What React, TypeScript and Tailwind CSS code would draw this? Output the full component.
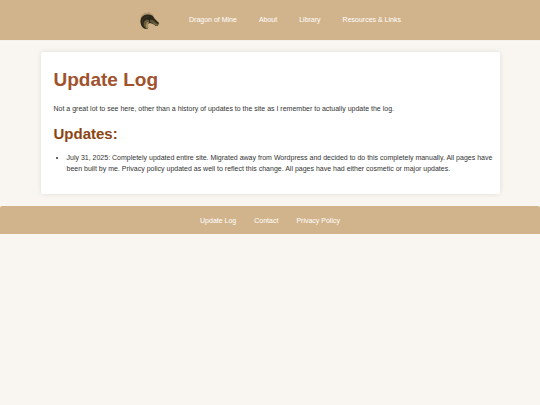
const navLinks = ["Dragon of Mine", "About", "Library", "Resources & Links"];
const footerLinks = ["Update Log", "Contact", "Privacy Policy"];

function DragonLogo() {
    return (
        <svg viewBox="0 0 40 34" className="h-[17px] w-5" role="img" aria-label="Dragon of Mine">
            <path d="M3 11l2-5 4-2 3-3 4 1 4-2 3 3 4 1 3 5-5 2-12 2-8 5z" fill="#8f7a59" opacity=".5" />
            <path
                d="M3 21C2 12 8 6 16 5c7-1 12 2 15 8l5 5 4 4-2 5-4 1-6-4-6-2-4 2-1 5 1 4-5 1C8 33 4 28 3 21z"
                fill="#2a2619"
            />
            <path d="M12 31c-5-6-3-13 3-16l6 2-3 4-1 6 1 6-3 0z" fill="#6b5e39" />
            <path d="M15 33c-3-6-1-11 3-14l2 1-2 6 1 6z" fill="#a08d5e" />
            <path d="M22 15l6 1 6 5 4 3-1 3-4 0-5-4-6-3z" fill="#5d5233" />
            <path d="M28 22l5 3 4 1" fill="none" stroke="#b39c6b" strokeWidth="1" />
            <path d="M7 22C6 14 11 10 19 9" fill="none" stroke="#3f3825" strokeWidth="2" />
        </svg>
    );
}

export default function App() {
    return (
        <div className="min-h-screen bg-[#f9f5f0] font-['Liberation_Sans',Arial,sans-serif] text-[7px] leading-[11px] text-[#333333]">
            <header className="bg-[#d2b48c] py-3 shadow-[0_0_1px_rgba(0,0,0,0.1)]">
                <nav className="flex h-4 items-center justify-center gap-[22px] text-white">
                    <a href="#home" className="mr-2">
                        <DragonLogo />
                    </a>
                    {navLinks.map(link => <a key={link} href="#" className="pb-0.5">{link}</a>)}
                </nav>
            </header>

            <main className="mx-auto my-3 w-[85%] rounded-xs bg-white pt-[13px] pr-1 pb-5 pl-[13px] shadow-[0_0_5px_rgba(0,0,0,0.1)]">
                <h1 className="text-[19px] leading-[30px] font-bold text-[#a0522d]">Update Log</h1>
                <p className="mt-2">
                    Not a great lot to see here, other than a history of updates to the site as I remember to actually update the log.
                </p>
                <h2 className="mt-2 text-[15px] leading-6 font-bold text-[#8b4513]">Updates:</h2>
                <ul className="mt-1.5 list-disc pl-[13px]">
                    <li>
                        July 31, 2025: Completely updated entire site. Migrated away from Wordpress and decided to do this
                        completely manually. All pages have been built by me. Privacy policy updated as well to reflect this
                        change. All pages have had either cosmetic or major updates.
                    </li>
                </ul>
            </main>

            <footer className="rounded-t-xs bg-[#d2b48c] py-2">
                <nav className="flex h-3 items-center justify-center gap-[18px] text-white">
                    {footerLinks.map(link => <a key={link} href="#">{link}</a>)}
                </nav>
            </footer>
        </div>
    );
}
